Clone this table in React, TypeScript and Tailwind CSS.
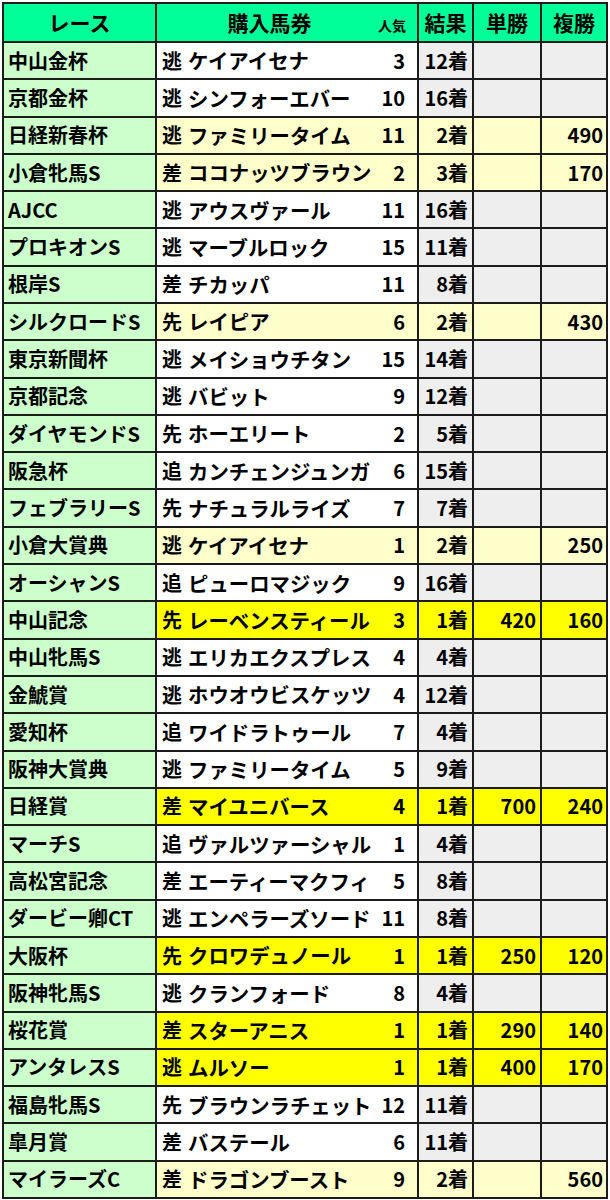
import React from "react";

type Kind = "n" | "p" | "w";
type Row = [string, string, string, number, string, string, string, Kind];

const rows: Row[] = [
  ["中山金杯", "逃", "ケイアイセナ", 3, "12着", "", "", "n"],
  ["京都金杯", "逃", "シンフォーエバー", 10, "16着", "", "", "n"],
  ["日経新春杯", "逃", "ファミリータイム", 11, "2着", "", "490", "p"],
  ["小倉牝馬S", "差", "ココナッツブラウン", 2, "3着", "", "170", "p"],
  ["AJCC", "逃", "アウスヴァール", 11, "16着", "", "", "n"],
  ["プロキオンS", "逃", "マーブルロック", 15, "11着", "", "", "n"],
  ["根岸S", "差", "チカッパ", 11, "8着", "", "", "n"],
  ["シルクロードS", "先", "レイピア", 6, "2着", "", "430", "p"],
  ["東京新聞杯", "逃", "メイショウチタン", 15, "14着", "", "", "n"],
  ["京都記念", "逃", "バビット", 9, "12着", "", "", "n"],
  ["ダイヤモンドS", "先", "ホーエリート", 2, "5着", "", "", "n"],
  ["阪急杯", "追", "カンチェンジュンガ", 6, "15着", "", "", "n"],
  ["フェブラリーS", "先", "ナチュラルライズ", 7, "7着", "", "", "n"],
  ["小倉大賞典", "逃", "ケイアイセナ", 1, "2着", "", "250", "p"],
  ["オーシャンS", "追", "ピューロマジック", 9, "16着", "", "", "n"],
  ["中山記念", "先", "レーベンスティール", 3, "1着", "420", "160", "w"],
  ["中山牝馬S", "逃", "エリカエクスプレス", 4, "4着", "", "", "n"],
  ["金鯱賞", "逃", "ホウオウビスケッツ", 4, "12着", "", "", "n"],
  ["愛知杯", "追", "ワイドラトゥール", 7, "4着", "", "", "n"],
  ["阪神大賞典", "逃", "ファミリータイム", 5, "9着", "", "", "n"],
  ["日経賞", "差", "マイユニバース", 4, "1着", "700", "240", "w"],
  ["マーチS", "追", "ヴァルツァーシャル", 1, "4着", "", "", "n"],
  ["高松宮記念", "差", "エーティーマクフィ", 5, "8着", "", "", "n"],
  ["ダービー卿CT", "逃", "エンペラーズソード", 11, "8着", "", "", "n"],
  ["大阪杯", "先", "クロワデュノール", 1, "1着", "250", "120", "w"],
  ["阪神牝馬S", "逃", "クランフォード", 8, "4着", "", "", "n"],
  ["桜花賞", "差", "スターアニス", 1, "1着", "290", "140", "w"],
  ["アンタレスS", "逃", "ムルソー", 1, "1着", "400", "170", "w"],
  ["福島牝馬S", "先", "ブラウンラチェット", 12, "11着", "", "", "n"],
  ["皐月賞", "差", "バステール", 6, "11着", "", "", "n"],
  ["マイラーズC", "差", "ドラゴンブースト", 9, "2着", "", "560", "p"],
];

const font = { fontFamily: '"Noto Sans CJK JP", "Noto Sans", sans-serif' };

export default function App() {
  return (
    <div className="w-[610px] h-[1200px] bg-white pt-[2px] pl-[2px]" style={font}>
      <div className="grid w-[606px] h-[1197px] bg-[#1c1c1c] p-[2px] gap-[2px] grid-cols-[151px_260px_53px_66px_64px] grid-rows-[37px_repeat(31,minmax(0,1fr))] font-bold text-black">
        <div className="bg-[#00ff99] flex items-center justify-center text-[21px] leading-none">レース</div>
        <div className="bg-[#00ff99] flex items-center text-[21px] leading-none">
          <span className="flex-1 text-center pl-[4px]">購入馬券</span>
          <span className="text-[14px] mr-[11px] mt-[4px]">人気</span>
        </div>
        <div className="bg-[#00ff99] flex items-center justify-center text-[21px] leading-none">結果</div>
        <div className="bg-[#00ff99] flex items-center justify-center text-[21px] leading-none">単勝</div>
        <div className="bg-[#00ff99] flex items-center justify-center text-[21px] leading-none">複勝</div>
        {rows.map(([race, style, horse, pop, res, tan, fuku, kind], i) => {
          const main = kind === "w" ? "bg-[#ffff00]" : kind === "p" ? "bg-[#ffffcc]" : "bg-white";
          const side = kind === "w" ? "bg-[#ffff00]" : kind === "p" ? "bg-[#ffffcc]" : "bg-[#eeeeee]";
          return (
            <React.Fragment key={i}>
              <div className="bg-[#ccffcc] flex items-center pl-[4px] text-[20px] leading-none whitespace-nowrap">{race}</div>
              <div className={`${main} flex items-center pl-[5px] pr-[12px] text-[20px] leading-none whitespace-nowrap`}>
                <span>{style}</span>
                <span className="ml-[6px] flex-1 text-[20.4px]">{horse}</span>
                <span>{pop}</span>
              </div>
              <div className={`${side} flex items-center justify-end pr-[4px] text-[20px] leading-none`}>{res}</div>
              <div className={`${side} flex items-center justify-end pr-[4px] text-[20px] leading-none`}>{tan}</div>
              <div className={`${side} flex items-center justify-end pr-[3px] text-[20px] leading-none`}>{fuku}</div>
            </React.Fragment>
          );
        })}
      </div>
    </div>
  );
}
